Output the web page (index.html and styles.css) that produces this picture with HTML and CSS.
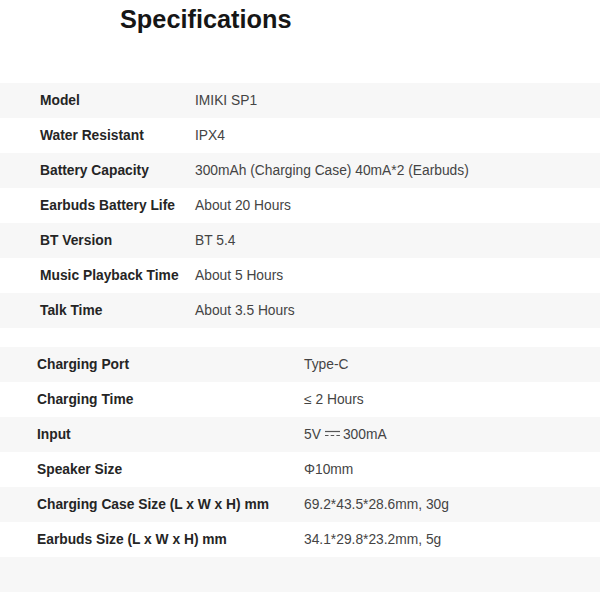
FILE: index.html
```html
<!DOCTYPE html>
<html>
<head>
<meta charset="utf-8">
<link rel="stylesheet" href="styles.css">
</head>
<body>
<h1 class="title">Specifications</h1>
<div class="table t1">
  <div class="row"><span class="k">Model</span><span class="v">IMIKI SP1</span></div>
  <div class="row"><span class="k">Water Resistant</span><span class="v">IPX4</span></div>
  <div class="row"><span class="k">Battery Capacity</span><span class="v">300mAh (Charging Case) 40mA*2 (Earbuds)</span></div>
  <div class="row"><span class="k">Earbuds Battery Life</span><span class="v">About 20 Hours</span></div>
  <div class="row"><span class="k">BT Version</span><span class="v">BT 5.4</span></div>
  <div class="row"><span class="k">Music Playback Time</span><span class="v">About 5 Hours</span></div>
  <div class="row"><span class="k">Talk Time</span><span class="v">About 3.5 Hours</span></div>
</div>
<div class="table t2">
  <div class="row"><span class="k">Charging Port</span><span class="v">Type-C</span></div>
  <div class="row"><span class="k">Charging Time</span><span class="v">≤ 2 Hours</span></div>
  <div class="row"><span class="k">Input</span><span class="v">5V<svg class="dc" width="17" height="8" viewBox="0 0 17 8"><line x1="1" y1="1.5" x2="16" y2="1.5" stroke="#555" stroke-width="1.2"/><line x1="1" y1="5.5" x2="16" y2="5.5" stroke="#555" stroke-width="1.2" stroke-dasharray="3.5 2.2"/></svg>300mA</span></div>
  <div class="row"><span class="k">Speaker Size</span><span class="v">Φ10mm</span></div>
  <div class="row"><span class="k">Charging Case Size (L x W x H) mm</span><span class="v">69.2*43.5*28.6mm, 30g</span></div>
  <div class="row"><span class="k">Earbuds Size (L x W x H) mm</span><span class="v">34.1*29.8*23.2mm, 5g</span></div>
  <div class="row"><span class="k"></span><span class="v"></span></div>
</div>
</body>
</html>
```
FILE: styles.css
```css
html, body {
  margin: 0;
  padding: 0;
  background: #ffffff;
  font-family: "Liberation Sans", Arial, sans-serif;
}
.title {
  margin: 0;
  padding: 5px 0 0 120px;
  font-size: 25.3px;
  font-weight: bold;
  line-height: 29px;
  color: #161616;
}
.table {
  display: flex;
  flex-direction: column;
}
.t1 {
  margin-top: 49px;
}
.t2 {
  margin-top: 18.5px;
}
.row {
  display: grid;
  height: 35px;
  align-items: center;
  font-size: 13.8px;
}
.t1 .row {
  grid-template-columns: 155px 1fr;
  padding-left: 40px;
}
.t2 .row {
  grid-template-columns: 267px 1fr;
  padding-left: 37px;
}
.row:nth-child(odd) {
  background: #f7f7f7;
}
.k {
  font-weight: bold;
  color: #252525;
}
.v {
  color: #444444;
  display: flex;
  align-items: center;
}
.dc {
  margin: 0 2px 0 3px;
}
```
